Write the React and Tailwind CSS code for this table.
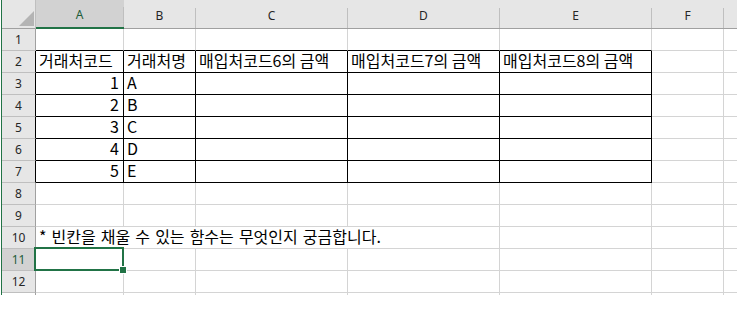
import React from "react";

const COLUMNS = ["A", "B", "C", "D", "E", "F", "G"];
const ROWS = [1, 2, 3, 4, 5, 6, 7, 8, 9, 10, 11, 12];

const HEADINGS = ["거래처코드", "거래처명", "매입처코드6의 금액", "매입처코드7의 금액", "매입처코드8의 금액"];
const RECORDS = [
  [1, "A"],
  [2, "B"],
  [3, "C"],
  [4, "D"],
  [5, "E"],
];

const cellFont = "font-['Noto_Sans_CJK_KR',sans-serif] text-[16px] leading-[18px] text-black";
const headFont = "font-['Noto_Sans',sans-serif] text-[12px]";

// content of a worksheet cell at row r, column index c
const cellValue = (r, c) => {
  if (r === 2 && c < HEADINGS.length) return { text: HEADINGS[c] };
  if (r >= 3 && r <= 7) {
    const rec = RECORDS[r - 3];
    if (c === 0) return { text: rec[0], right: true };
    if (c === 1) return { text: rec[1] };
  }
  return null;
};

// the last column only peeks in at the window edge, so its letter stays hidden
const ColumnHeader = ({ label, selected, clipped }) => (
  <div
    className={`flex ${
      selected ? "bg-[#d2d2d2] border-b-2 border-b-[#217346] text-[#1d5c38]" : "bg-[#e6e6e6] border-b border-b-[#a0a0a0] text-[#262626]"
    }`}
  >
    <span className={`flex-1 flex items-center justify-center pt-[3px] ${headFont}`}>{clipped ? "" : label}</span>
    <span className="w-px h-[20px] self-end bg-[#bfbfbf]" />
  </div>
);

const RowHeader = ({ r }) => {
  const selected = r === 11;
  const ruled = r >= 2 && r <= 7;
  return (
    <div
      className={`flex items-center justify-center pt-px border-r border-b border-b-[#bfbfbf] ${headFont} ${
        ruled ? "border-r-black" : "border-r-[#a0a0a0]"
      } ${selected ? "bg-[#d2d2d2] text-[#1d5c38]" : "bg-[#e6e6e6] text-[#262626]"}`}
    >
      {r}
    </div>
  );
};

const Cell = ({ r, c }) => {
  const ruled = r >= 2 && r <= 7 && c <= 4;
  const ruledBelow = ruled || (r === 1 && c <= 4);
  const value = cellValue(r, c);
  const active = r === 11 && c === 0;
  return (
    <div
      className={`relative flex items-start border-r border-b px-[3px] ${cellFont} ${
        ruled ? "border-r-black" : "border-r-[#d4d4d4]"
      } ${ruledBelow ? "border-b-black" : "border-b-[#d4d4d4]"} ${
        value && value.right ? "justify-end pr-[4px]" : "justify-start"
      }`}
    >
      {value && <span className="whitespace-nowrap">{value.text}</span>}
      {active && (
        <span className="absolute -left-[2px] -top-[2px] -right-px -bottom-px z-10 border-2 border-[#217346]">
          <span className="absolute -right-[5px] -bottom-[5px] w-[8px] h-[8px] border border-white bg-[#217346]" />
        </span>
      )}
    </div>
  );
};

export default function App() {
  return (
    <div className="w-[737px] h-[323px] bg-white overflow-hidden pl-px">
      <div className="h-[295px] overflow-hidden border-l border-l-[#217346]">
        <div className="grid grid-cols-[34px_88px_72px_152px_152px_152px_72px_72px] grid-rows-[29px_repeat(12,22px)_3px]">
          {/* corner */}
          <div className="flex items-end justify-end pr-[1px] pb-[2px] bg-[#e6e6e6] border-r border-b border-r-[#bfbfbf] border-b-[#a0a0a0]">
            <svg width="15" height="15" viewBox="0 0 15 15">
              <polygon points="15,0 15,15 0,15" fill="#b4b4b4" />
            </svg>
          </div>
          {COLUMNS.map((col, i) => (
            <ColumnHeader key={col} label={col} selected={i === 0} clipped={i === COLUMNS.length - 1} />
          ))}

          {ROWS.map((r) => (
            <React.Fragment key={r}>
              <RowHeader r={r} />
              {r === 10 ? (
                <>
                  <div className={`col-span-4 flex items-start px-[3px] border-r border-b border-[#d4d4d4] ${cellFont}`}>
                    <span className="whitespace-nowrap [word-spacing:1.5px]">* 빈칸을 채울 수 있는 함수는 무엇인지 궁금합니다.</span>
                  </div>
                  {[4, 5, 6].map((c) => (
                    <Cell key={c} r={r} c={c} />
                  ))}
                </>
              ) : (
                COLUMNS.map((col, c) => <Cell key={col} r={r} c={c} />)
              )}
            </React.Fragment>
          ))}

          {/* top sliver of row 13 */}
          <div className="border-r border-r-[#a0a0a0]" />
          {COLUMNS.map((col) => (
            <div key={col} className="border-r border-r-[#d4d4d4]" />
          ))}
        </div>
      </div>
    </div>
  );
}
